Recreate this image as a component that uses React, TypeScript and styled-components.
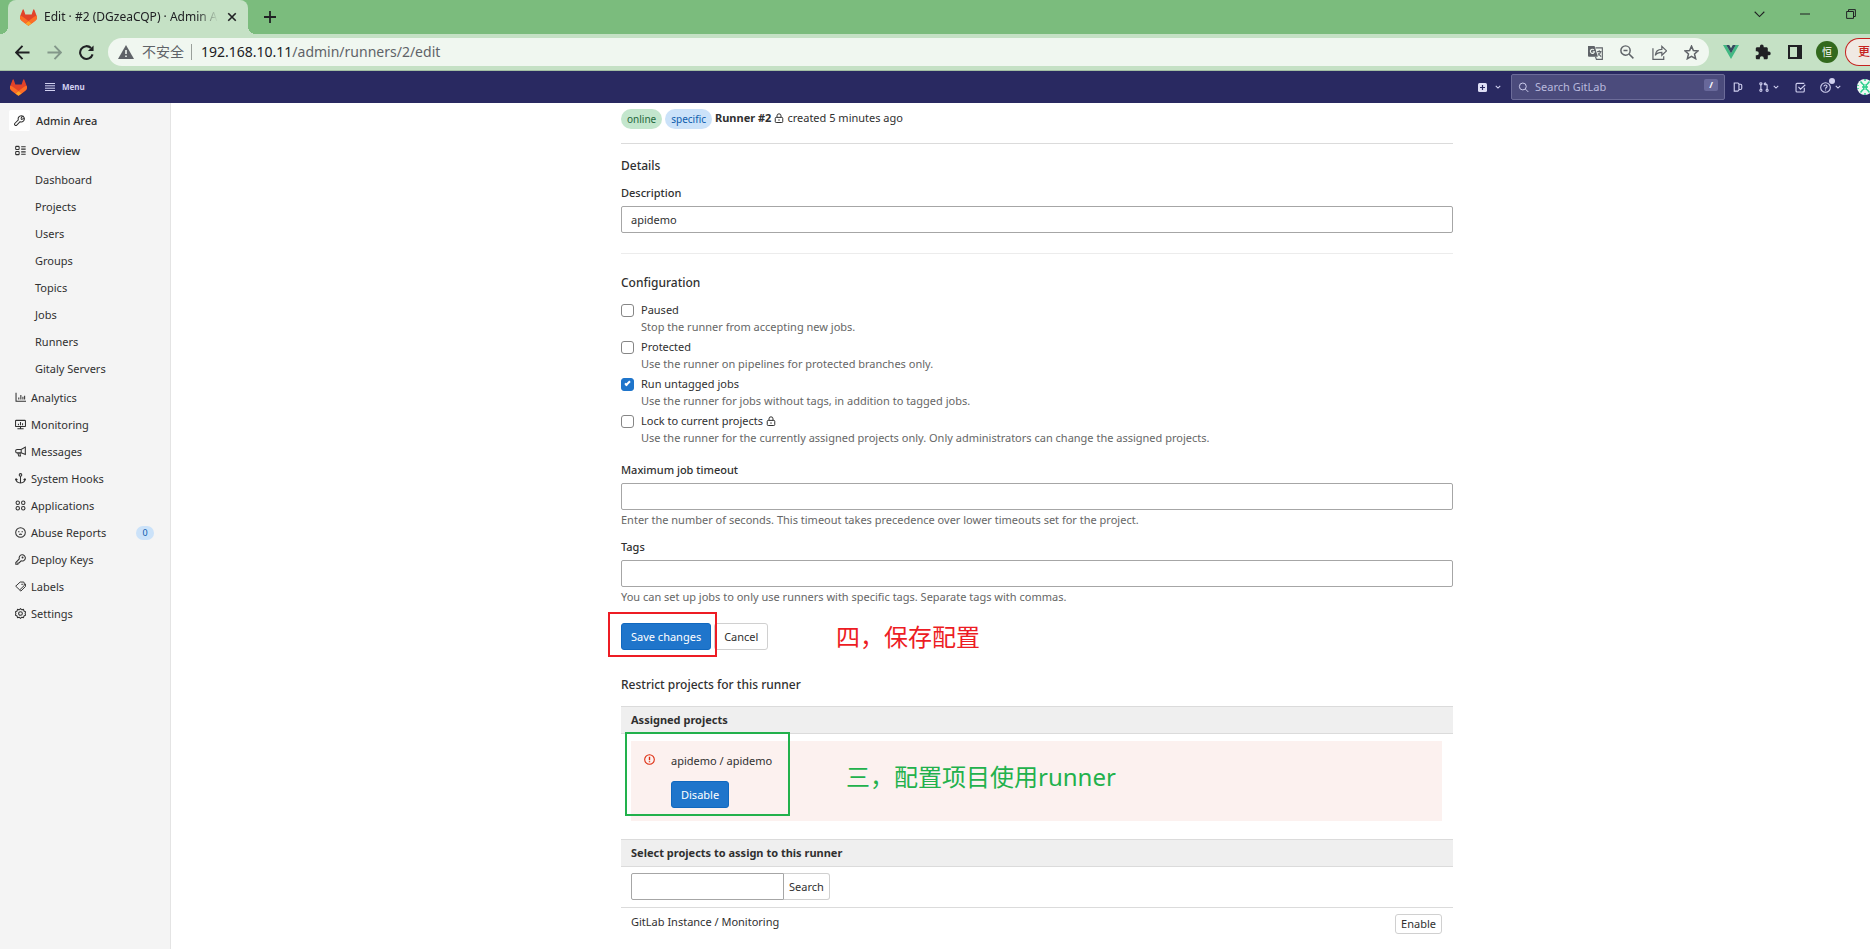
import React from "react";
import styled, { createGlobalStyle } from "styled-components";

const sans = `"Noto Sans", "Open Sans", "Noto Sans CJK SC", sans-serif`;

const GlobalStyle = createGlobalStyle`
  *, *::before, *::after { box-sizing: border-box; }
  html, body { margin: 0; padding: 0; }
  body {
    background: #fff;
    color: #303030;
    font-family: ${sans};
    font-size: 11px;
    line-height: 16px;
    overflow-x: hidden;
  }
  button, input { font: inherit; color: inherit; margin: 0; }
  button { cursor: pointer; }
  svg { display: block; flex: none; }
`;

const Page = styled.div`
  display: flex;
  flex-direction: column;
  min-height: 100vh;
  overflow: hidden;
`;

/* ---------- Browser window ---------- */

const TabStrip = styled.div`
  display: flex;
  height: 34px;
  padding: 0 12px 0 8px;
  background: #7bbc7d;
`;

const Tab = styled.div`
  position: relative;
  display: flex;
  align-items: center;
  width: 240px;
  padding: 0 9px 0 12px;
  gap: 7px;
  border-radius: 8px 8px 0 0;
  background: #c5e1c5;
  color: #202124;
  &::before, &::after {
    content: "";
    position: absolute;
    bottom: 0;
    width: 8px;
    height: 8px;
  }
  &::before {
    left: -8px;
    background: radial-gradient(circle at 0 0, transparent 8px, #c5e1c5 8px);
  }
  &::after {
    right: -8px;
    background: radial-gradient(circle at 100% 0, transparent 8px, #c5e1c5 8px);
  }
`;

const TabTitle = styled.span`
  flex: 1;
  white-space: nowrap;
  font-size: 12px;
  mask-image: linear-gradient(to right, #000 88%, transparent);
`;

const IconButton = styled.button<{ $w?: number; $h?: number; $color?: string }>`
  display: flex;
  flex: none;
  align-items: center;
  justify-content: center;
  width: ${(p) => p.$w ?? 32}px;
  height: ${(p) => p.$h ?? 28}px;
  padding: 0;
  border: 0;
  background: none;
  color: ${(p) => p.$color ?? "#202124"};
`;

const NewTab = styled(IconButton)`
  margin-left: 6px;
  align-self: center;
`;

const WindowControls = styled.div`
  display: flex;
  margin-left: auto;
  margin-right: -16px;
`;

const Toolbar = styled.div`
  display: flex;
  align-items: center;
  height: 37px;
  padding-left: 6px;
  background: #c5e1c5;
  border-bottom: 1px solid #a3bfa4;
`;

const Omnibox = styled.div`
  display: flex;
  flex: 1;
  align-items: center;
  height: 28px;
  margin: 0 6px;
  padding: 0 2px 0 10px;
  border-radius: 14px;
  background: #f0f7f0;
  color: #5f6368;
`;

const Insecure = styled.span`
  margin-left: 8px;
  padding-right: 7px;
  border-right: 1px solid #9aa09b;
  font-size: 14px;
`;

const Url = styled.span`
  flex: 1;
  margin-left: 9px;
  font-size: 14px;
  white-space: nowrap;
  b { font-weight: 400; color: #202124; }
`;

const Profile = styled.span`
  display: flex;
  align-items: center;
  justify-content: center;
  width: 22px;
  height: 22px;
  margin: 0 7px 0 5px;
  border-radius: 50%;
  background: #33691e;
  color: #fff;
  font-size: 10px;
`;

const UpdateButton = styled.button`
  width: 25px;
  height: 28px;
  padding: 0 0 0 12px;
  border: 1px solid #c5221f;
  border-right: 0;
  border-radius: 14px 0 0 14px;
  background: #f0e9e3;
  color: #c5221f;
  font-size: 12px;
  font-weight: 500;
  text-align: left;
  white-space: nowrap;
`;

/* ---------- GitLab top bar ---------- */

const TopBar = styled.header`
  display: flex;
  align-items: center;
  height: 32px;
  padding-left: 10px;
  background: #292961;
  color: #d1d1f0;
`;

const MenuButton = styled.button`
  display: flex;
  align-items: center;
  gap: 7px;
  margin-left: 18px;
  padding: 0;
  border: 0;
  background: none;
  font-size: 8px;
  font-weight: 700;
`;

const TopActions = styled.div`
  display: flex;
  align-items: center;
  margin-left: auto;
`;

const SearchBox = styled.label`
  position: relative;
  display: flex;
  align-items: center;
  width: 214px;
  height: 26px;
  margin: 0 8px 0 10px;
  padding: 0 6px;
  border: 1px solid #6c6c99;
  border-radius: 2px;
  background: #4b4b7c;
  input {
    width: 100%;
    margin-left: 6px;
    padding: 0;
    border: 0;
    outline: 0;
    background: none;
  }
  input::placeholder { color: #b9b9dc; opacity: 1; }
`;

const Key = styled.kbd`
  flex: none;
  align-self: flex-start;
  width: 14px;
  height: 12px;
  margin-top: 4px;
  border-radius: 2px;
  background: #68689a;
  color: #fff;
  font: 700 9px/12px ${sans};
  text-align: center;
`;

const TopItem = styled.button<{ $ml?: number }>`
  position: relative;
  display: flex;
  align-items: center;
  gap: 4px;
  height: 24px;
  margin-left: ${(p) => p.$ml ?? 16}px;
  padding: 0;
  border: 0;
  background: none;
`;

const Dot = styled.span`
  position: absolute;
  left: 9px;
  top: 3px;
  width: 6px;
  height: 6px;
  border-radius: 50%;
  background: #d1d1f0;
`;

const Avatar = styled.span`
  width: 13px;
  height: 16px;
  margin-left: 16px;
  overflow: hidden;
`;

/* ---------- Sidebar ---------- */

const Body = styled.div`
  display: flex;
  flex: 1;
`;

const Sidebar = styled.nav`
  flex: none;
  width: 171px;
  padding-top: 7px;
  border-right: 1px solid #e4e4e4;
  background: #f4f4f4;
`;

const ContextLink = styled.a`
  display: flex;
  align-items: center;
  gap: 6px;
  height: 21px;
  margin-left: 9px;
  color: #303030;
  font-weight: 500;
  text-decoration: none;
  span {
    display: flex;
    align-items: center;
    justify-content: center;
    width: 21px;
    height: 21px;
    border-radius: 2px;
    background: #fff;
  }
`;

const NavList = styled.ul<{ $sub?: boolean }>`
  margin: 0;
  padding: ${(p) => (p.$sub ? "2px 0 2px" : "6px 0 0")};
  list-style: none;
`;

const NavLink = styled.a<{ $sub?: boolean; $active?: boolean }>`
  display: flex;
  align-items: center;
  gap: 5px;
  height: 27px;
  padding: 0 16px 0 ${(p) => (p.$sub ? 35 : 15)}px;
  color: #303030;
  font-weight: ${(p) => (p.$active ? 500 : 400)};
  text-decoration: none;
`;

const Count = styled.span`
  width: 18px;
  height: 14px;
  margin-left: auto;
  border-radius: 7px;
  background: #cbe2f9;
  color: #0b5cad;
  font-size: 9px;
  line-height: 14px;
  text-align: center;
`;

/* ---------- Main content ---------- */

const Main = styled.main`
  flex: 1;
  min-width: 0;
  padding: 6px 0 0 33px;
`;

const Column = styled.div`
  width: 100%;
  max-width: 832px;
  margin: 0 auto;
`;

const RunnerHeader = styled.div`
  display: flex;
  gap: 3px;
  height: 20px;
`;

const Badge = styled.span<{ $tone: "green" | "blue" }>`
  height: 20px;
  padding: 0 6px;
  border-radius: 10px;
  background: ${(p) => (p.$tone === "green" ? "#c3e6cd" : "#cbe2f9")};
  color: ${(p) => (p.$tone === "green" ? "#24663b" : "#0b5cad")};
  font-size: 10px;
  line-height: 20px;
`;

const RunnerName = styled.span`
  display: flex;
  align-items: center;
  gap: 3px;
  height: 18px;
`;

const Rule = styled.hr<{ $light?: boolean }>`
  height: 1px;
  margin: ${(p) => (p.$light ? "20px 0 21px" : "14px 0 14px")};
  border: 0;
  background: ${(p) => (p.$light ? "#ececec" : "#dbdbdb")};
`;

const SectionTitle = styled.h4`
  margin: 0 0 11px;
  font-size: 12px;
  font-weight: 500;
  line-height: 16px;
`;

const Field = styled.div`
  display: flex;
  flex-direction: column;
  & + & { margin-top: 11px; }
`;

const FieldLabel = styled.label`
  margin-bottom: 5px;
  font-weight: 500;
`;

const TextInput = styled.input`
  width: 100%;
  height: 27px;
  padding: 0 9px;
  border: 1px solid #a6a6a6;
  border-radius: 2px;
  background: #fff;
`;

const Help = styled.p`
  margin: 0;
  color: #666;
`;

const FieldHelp = styled(Help)`
  margin-top: 2px;
`;

const Checks = styled.div`
  display: flex;
  flex-direction: column;
  gap: 4px;
  margin-bottom: 16px;
`;

const Check = styled.div`
  display: grid;
  grid-template-columns: 13px 1fr;
  column-gap: 7px;
  row-gap: 1px;
  align-items: center;
  label {
    display: flex;
    align-items: center;
    gap: 3px;
  }
  ${Help} { grid-column: 2; }
`;

const Checkbox = styled.input`
  appearance: none;
  width: 13px;
  height: 13px;
  border: 1px solid #868686;
  border-radius: 3px;
  background: #fff;
  &:checked {
    border-color: #1f75cb;
    background: #1f75cb;
  }
  &:checked::after {
    content: "";
    display: block;
    width: 3px;
    height: 6px;
    margin: 1px 0 0 4px;
    border: solid #fff;
    border-width: 0 2px 2px 0;
    transform: rotate(45deg);
  }
`;

const Actions = styled.div`
  position: relative;
  display: flex;
  gap: 3px;
  margin: 18px 0 27px;
`;

const Button = styled.button<{ $primary?: boolean; $small?: boolean }>`
  height: ${(p) => (p.$small ? 20 : 27)}px;
  padding: 0 ${(p) => (p.$small ? 5 : 9)}px;
  border: 1px solid ${(p) => (p.$primary ? "#1068bf" : "#d0d0d0")};
  border-radius: 3px;
  background: ${(p) => (p.$primary ? "#1f75cb" : "#fff")};
  color: ${(p) => (p.$primary ? "#fff" : "#303030")};
  line-height: 16px;
  white-space: nowrap;
`;

const Table = styled.table`
  width: 100%;
  border-collapse: separate;
  border-spacing: 0;
  margin: 13px 0;
`;

const HeadCell = styled.th`
  height: 28px;
  padding: 0 10px;
  border-top: 1px solid #dbdbdb;
  border-bottom: 1px solid #dbdbdb;
  background: #efefef;
  font-weight: 700;
  text-align: left;
`;

const AlertCell = styled.td`
  padding: 7px 11px 5px 10px;
`;

const Alert = styled.div`
  position: relative;
  display: flex;
  gap: 16px;
  height: 80px;
  padding: 12px 13px;
  background: #fcf1ef;
`;

const AlertBody = styled.div`
  display: flex;
  flex-direction: column;
  align-items: flex-start;
  gap: 12px;
`;

const AlertIcon = styled.span`
  padding-top: 1px;
`;

const SearchCell = styled.td`
  padding: 6px 10px 7px;
  border-bottom: 1px solid #dbdbdb;
`;

const SearchForm = styled.form`
  display: flex;
  ${TextInput} {
    width: 153px;
    border-radius: 2px 0 0 2px;
  }
  ${Button} {
    padding: 0 5px;
    border-left: 0;
    border-radius: 0 3px 3px 0;
  }
`;

const ProjectCell = styled.td<{ $end?: boolean }>`
  padding: 6px 11px 0 10px;
  vertical-align: top;
  text-align: ${(p) => (p.$end ? "right" : "left")};
`;

/* ---------- Hand-drawn marks over the page ---------- */

const Frame = styled.span<{ $color: string }>`
  position: absolute;
  border: 2px solid ${(p) => p.$color};
  pointer-events: none;
`;

const SaveFrame = styled(Frame)`
  left: -13px;
  top: -11px;
  width: 109px;
  height: 45px;
`;

const ProjectFrame = styled(Frame)`
  left: -6px;
  top: -9px;
  width: 165px;
  height: 84px;
`;

const Note = styled.span<{ $color: string }>`
  position: absolute;
  left: 215px;
  top: 0;
  color: ${(p) => p.$color};
  font-size: 24px;
  line-height: 28px;
  white-space: nowrap;
`;

const ProjectNote = styled(Note)`
  top: 22px;
`;

/* ---------- Icons ---------- */

type IconProps = { size?: number; children: React.ReactNode; sw?: number };

const Icon = ({ size = 11, sw = 1.5, children }: IconProps) => (
  <svg width={size} height={size} viewBox="0 0 16 16" fill="none" stroke="currentColor" strokeWidth={sw} aria-hidden="true">
    {children}
  </svg>
);

const Tanuki = () => (
  <svg width="17" height="17" viewBox="0 0 25 24" aria-hidden="true">
    <path fill="#e24329" d="m24.507 9.5-.034-.09L21.082.562a.896.896 0 0 0-1.694.091l-2.290 7.010H7.825L5.535.653a.898.898 0 0 0-1.694-.090L.451 9.411.416 9.500a6.297 6.297 0 0 0 2.090 7.278l.012.010.030.022 5.160 3.867 2.560 1.935 1.554 1.176a1.051 1.051 0 0 0 1.268 0l1.555-1.176 2.560-1.935 5.197-3.890.014-.010A6.297 6.297 0 0 0 24.507 9.500Z" />
    <path fill="#fc6d26" d="m24.507 9.500-.034-.090a11.440 11.440 0 0 0-4.560 2.051l-7.447 5.632 4.742 3.584 5.197-3.890.014-.010A6.297 6.297 0 0 0 24.507 9.500Z" />
    <path fill="#fca326" d="m7.707 20.677 2.560 1.935 1.555 1.176a1.051 1.051 0 0 0 1.268 0l1.555-1.176 2.560-1.935-4.743-3.584-4.755 3.584Z" />
    <path fill="#fc6d26" d="M5.010 11.461a11.430 11.430 0 0 0-4.560-2.050L.416 9.500a6.297 6.297 0 0 0 2.090 7.278l.012.010.030.022 5.160 3.867 4.745-3.584-7.444-5.632Z" />
  </svg>
);

const Lock = () => (
  <Icon size={10} sw={1.6}>
    <rect x="2" y="7" width="12" height="8.2" rx="1.5" />
    <path d="M4.800 7V4.500a3.200 3.200 0 0 1 6.400 0V7M8 10v2.500" />
  </Icon>
);

const Chevron = ({ size = 6 }: { size?: number }) => (
  <Icon size={size} sw={2.8}><path d="m2 5 6 6 6-6" /></Icon>
);

const Wrench = () => (
  <Icon>
    <path d="M10.500 1.200a4.500 4.500 0 0 0-4.200 6L1.400 12a1.800 1.800 0 0 0 2.600 2.600l4.900-4.900a4.500 4.500 0 0 0 6-5.400 4.500 4.500 0 0 0-4.400-3.100zM10 5l2-3M10 5l1 1.500 3.500-1.500" />
  </Icon>
);

const icons: Record<string, React.ReactNode> = {
  overview: (
    <Icon>
      <rect x="1" y="2" width="5" height="4.5" rx="1" /><rect x="1" y="9.5" width="5" height="4.5" rx="1" />
      <path d="M9 2.500h6.500M9 6h6.500M9 10h6.500M9 13.500h6.500" />
    </Icon>
  ),
  analytics: <Icon><path d="M1.500 1v12.500H16M5.500 11V8M8.500 11V4.500M11.500 11V7M14 11V5.500" /></Icon>,
  monitoring: (
    <Icon>
      <rect x=".8" y="2" width="14.4" height="9" rx="1" />
      <path d="M5 9V7M8 9V4.500M11 9V6M8 11v3M3.500 14.200h9" />
    </Icon>
  ),
  messages: (
    <Icon>
      <path d="M15 1.500v11L9 10H3a2 2 0 0 1-2-2V7a2 2 0 0 1 2-2h6zM9 5v5M4 10l1.500 4.500H8L7 10" />
    </Icon>
  ),
  hooks: (
    <Icon>
      <circle cx="8" cy="2.8" r="1.9" />
      <path d="M8 4.700v9.800M1.500 8.500c0 4 3 6 6.500 6s6.500-2 6.500-6M.3 10.500l1.300-2 2 1.500M15.700 10.500l-1.300-2-2 1.500" />
    </Icon>
  ),
  applications: (
    <Icon>
      <circle cx="4" cy="4" r="2.5" /><circle cx="12" cy="4" r="2.5" />
      <circle cx="4" cy="12" r="2.5" /><circle cx="12" cy="12" r="2.5" />
    </Icon>
  ),
  abuse: (
    <Icon>
      <circle cx="8" cy="8" r="7" />
      <path d="M4.500 7h2M9.500 7h2M6 11.200c1-1 3-1 4 0" />
    </Icon>
  ),
  keys: (
    <Icon>
      <path d="M6.300 7.200 1.200 12.400v2.400h3V13h1.700l3-3.100a4.500 4.500 0 1 0-2.600-2.700z" />
      <circle cx="11" cy="5" r=".7" />
    </Icon>
  ),
  labels: (
    <Icon sw={1.4}>
      <path d="M7.500 1.500H12a1.500 1.500 0 0 1 1.500 1.500v3.500L6.800 13 1 7.500zM6.800 13l1.700 1.700 6.700-6.700V4" />
      <circle cx="10.3" cy="4.7" r=".5" />
    </Icon>
  ),
  settings: (
    <Icon>
      <path d="m8 .9 1.800 1.700 2.500-.5.800 2.400 2.300 1L14.700 8l.7 2.500-2.300 1-.8 2.400-2.500-.5L8 15.100l-1.800-1.700-2.500.5-.8-2.400-2.300-1L1.300 8 .6 5.500l2.300-1 .8-2.400 2.500.5z" />
      <circle cx="8" cy="8" r="2.7" />
    </Icon>
  ),
};

const overviewLinks = ["Dashboard", "Projects", "Users", "Groups", "Topics", "Jobs", "Runners", "Gitaly Servers"];

const navLinks: { label: string; icon: string; count?: number }[] = [
  { label: "Analytics", icon: "analytics" },
  { label: "Monitoring", icon: "monitoring" },
  { label: "Messages", icon: "messages" },
  { label: "System Hooks", icon: "hooks" },
  { label: "Applications", icon: "applications" },
  { label: "Abuse Reports", icon: "abuse", count: 0 },
  { label: "Deploy Keys", icon: "keys" },
  { label: "Labels", icon: "labels" },
  { label: "Settings", icon: "settings" },
];

const options = [
  { id: "paused", label: "Paused", help: "Stop the runner from accepting new jobs." },
  { id: "protected", label: "Protected", help: "Use the runner on pipelines for protected branches only." },
  { id: "untagged", label: "Run untagged jobs", help: "Use the runner for jobs without tags, in addition to tagged jobs.", checked: true },
  {
    id: "locked",
    label: "Lock to current projects",
    help: "Use the runner for the currently assigned projects only. Only administrators can change the assigned projects.",
    lock: true,
  },
];

const BrowserChrome = () => (
  <>
    <TabStrip>
      <Tab>
        <Tanuki />
        <TabTitle>Edit · #2 (DGzeaCQP) · Admin A</TabTitle>
        <IconButton $w={14} $h={14} aria-label="Close tab">
          <Icon size={10} sw={2.6}><path d="m2 2 12 12M14 2 2 14" /></Icon>
        </IconButton>
      </Tab>
      <NewTab aria-label="New tab">
        <Icon size={12} sw={2.4}><path d="M8 0v16M0 8h16" /></Icon>
      </NewTab>
      <WindowControls>
        <IconButton $w={46} aria-label="Search tabs"><Icon size={11} sw={1.6}><path d="m1 4 7 7 7-7" /></Icon></IconButton>
        <IconButton $w={46} aria-label="Minimize"><Icon size={10} sw={1.6}><path d="M0 8h16" /></Icon></IconButton>
        <IconButton $w={46} aria-label="Restore">
          <Icon size={10} sw={1.6}><path d="M1 4h11v11H1zM4 4V1h11v11h-3" /></Icon>
        </IconButton>
      </WindowControls>
    </TabStrip>
    <Toolbar>
      <IconButton aria-label="Back"><Icon size={15} sw={2}><path d="M15.500 8H1.500M8 1 1.200 8 8 15" /></Icon></IconButton>
      <IconButton $color="#83978a" aria-label="Forward"><Icon size={15} sw={2}><path d="M.5 8h14M8 1l6.800 7L8 15" /></Icon></IconButton>
      <IconButton aria-label="Reload">
        <Icon size={15} sw={2.2}><path d="M14.500 10A6.800 6.800 0 1 1 12.800 3.200" /><path d="M15.500.5v6h-6z" fill="currentColor" stroke="none" /></Icon>
      </IconButton>
      <Omnibox>
        <svg width="16" height="14" viewBox="0 0 16 14" aria-hidden="true">
          <path d="M8 0l8 14H0z" fill="#5f6368" /><path d="M7.200 5h1.600v4H7.200zM7.200 10.500h1.600V12H7.200z" fill="#f0f7f0" />
        </svg>
        <Insecure>不安全</Insecure>
        <Url><b>192.168.10.11</b>/admin/runners/2/edit</Url>
        <IconButton $color="#5f6368" aria-label="Translate">
          <Icon size={15} sw={1.2}>
            <path d="M0 1h7l3.500 11.500H1a1 1 0 0 1-1-1z" fill="currentColor" stroke="none" />
            <path d="M8 3h7.300v12.300H9L8 12.500M9.800 7h4.500M12 5.500V7M13.500 7c-.4 2-1.500 3.300-3 4M10.800 9l3.200 3.500" />
            <path d="M6.300 5.200a2.200 2.200 0 1 0 .6 2H5" stroke="#f0f7f0" />
          </Icon>
        </IconButton>
        <IconButton $color="#5f6368" aria-label="Zoom">
          <Icon size={14} sw={1.7}><circle cx="6.3" cy="6.3" r="5.3" /><path d="m10.300 10.300 5 5M4 6.300h4.600" /></Icon>
        </IconButton>
        <IconButton $color="#5f6368" aria-label="Share">
          <Icon size={15} sw={1.3}><path d="M1 3.500v11.800h11.500V12M3.500 11c.5-4.500 3.500-6.300 7-6.300V1.500l5 4.800-5 4.700V7.800C7.500 7.800 5 8.500 3.500 11z" /></Icon>
        </IconButton>
        <IconButton $color="#5f6368" aria-label="Bookmark">
          <Icon size={15} sw={1.6}><path d="m8 1.200 2 4.700 5 .4-3.800 3.300 1.200 5L8 12l-4.400 2.600 1.200-5L1 6.300l5-.4z" /></Icon>
        </IconButton>
      </Omnibox>
      <IconButton aria-label="Vue.js devtools">
        <svg width="16" height="14" viewBox="0 0 16 14" aria-hidden="true">
          <path d="M0 0h3.200L8 8.300 12.800 0H16L8 14z" fill="#41b883" /><path d="M3.200 0h3L8 3.200 9.800 0h3L8 8.300z" fill="#35495e" />
        </svg>
      </IconButton>
      <IconButton aria-label="Extensions">
        <Icon size={16}>
          <path fill="currentColor" stroke="none" d="M13.800 7.500h-1V4.700c0-.8-.6-1.400-1.400-1.400H8.700V2.400a1.900 1.900 0 0 0-3.800 0v.9H2.200C1.400 3.300.8 3.900.8 4.700v2.600h1a2 2 0 0 1 0 4h-1v2.600c0 .8.600 1.400 1.400 1.400h2.600v-1a2 2 0 0 1 4 0v1h2.600c.8 0 1.400-.6 1.400-1.400v-2.600h1a1.900 1.900 0 0 0 0-3.800z" />
        </Icon>
      </IconButton>
      <IconButton aria-label="Side panel">
        <svg width="14" height="14" viewBox="0 0 14 14" aria-hidden="true"><path fill="#202124" fillRule="evenodd" d="M0 0h14v14H0zM2 2v10h7V2z" /></svg>
      </IconButton>
      <Profile>恒</Profile>
      <UpdateButton>更</UpdateButton>
    </Toolbar>
  </>
);

const GitLabBar = () => (
  <TopBar>
    <Tanuki />
    <MenuButton>
      <svg width="10" height="8" viewBox="0 0 10 8" stroke="currentColor" aria-hidden="true"><path d="M0 .5h10M0 2.800h10M0 5.200h10M0 7.500h10" /></svg>
      Menu
    </MenuButton>
    <TopActions>
      <TopItem aria-label="Create new">
        <svg width="9" height="9" viewBox="0 0 9 9" aria-hidden="true"><rect width="9" height="9" rx="1.5" fill="#dfdff5" /><path d="M4.500 2v5M2 4.500h5" stroke="#292961" strokeWidth="1.2" /></svg>
      </TopItem>
      <TopItem $ml={8} aria-label="More"><Chevron /></TopItem>
      <SearchBox>
        <Icon size={11} sw={1.4}><circle cx="7" cy="6.5" r="5" /><path d="m10.800 10.300 4.200 4.200" /></Icon>
        <input type="text" placeholder="Search GitLab" aria-label="Search GitLab" />
        <Key>/</Key>
      </SearchBox>
      <TopItem $ml={0} aria-label="Issues">
        <Icon size={10} sw={1.8}><path d="M2 1.500h5.500a2 2 0 0 1 2 2v9a2 2 0 0 1-2 2H2zM9.500 3.500h2.500a2 2 0 0 1 2 2v4.500a2 2 0 0 1-2 2H9.500" /></Icon>
      </TopItem>
      <TopItem aria-label="Merge requests">
        <Icon size={10} sw={1.8}><circle cx="3" cy="2.8" r="1.7" /><circle cx="3" cy="13.2" r="1.7" /><circle cx="13" cy="13.2" r="1.7" /><path d="M3 4.500v7M13 11.500V6c0-2-1-3-4-3M10.500.8 8.300 3l2.200 2.200" /></Icon>
        <Chevron />
      </TopItem>
      <TopItem aria-label="To-Do List">
        <Icon size={11} sw={1.6}><path d="M13.500 8.500V13a1.500 1.500 0 0 1-1.500 1.500H3A1.500 1.500 0 0 1 1.500 13V3.500A1.500 1.500 0 0 1 3 2h10.500M5 7l3 3.500 7-6.500" /></Icon>
      </TopItem>
      <TopItem $ml={14} aria-label="Help">
        <Icon size={11} sw={1.6}><circle cx="8" cy="8" r="7" /><path d="M5.800 6.500c0-3 4.600-2.800 4.400 0C10.200 8 8 8 8 9.800M8 11v1.500" /></Icon>
        <Dot />
        <Chevron />
      </TopItem>
      <Avatar>
        <svg width="16" height="16" viewBox="0 0 16 16" role="img" aria-label="Profile">
          <circle cx="8" cy="8" r="8" fill="#eefaf4" />
          <path d="M3.500 2.500 6 5.500M12.500 2.500 10 5.500M3.500 13.500 6 10.500M12.500 13.500 10 10.500M6.800 5v6M9.200 5v6M5 8h6M1 6v1M1 9v1M15 6v1M15 9v1M7 1h2M7 15h2" stroke="#2bd08c" strokeWidth="1.5" />
        </svg>
      </Avatar>
    </TopActions>
  </TopBar>
);

const AdminSidebar = () => (
  <Sidebar aria-label="Admin navigation">
    <ContextLink href="#admin"><span><Wrench /></span>Admin Area</ContextLink>
    <NavList>
      <li>
        <NavLink href="#overview" $active>{icons.overview}Overview</NavLink>
        <NavList $sub>
          {overviewLinks.map((label) => (
            <li key={label}><NavLink $sub href={"#" + label}>{label}</NavLink></li>
          ))}
        </NavList>
      </li>
      {navLinks.map(({ label, icon, count }) => (
        <li key={label}>
          <NavLink href={"#" + label}>
            {icons[icon]}
            {label}
            {count !== undefined && <Count>{count}</Count>}
          </NavLink>
        </li>
      ))}
    </NavList>
  </Sidebar>
);

export default function App() {
  return (
    <Page>
      <GlobalStyle />
      <BrowserChrome />
      <GitLabBar />
      <Body>
        <AdminSidebar />
        <Main>
          <Column>
            <RunnerHeader>
              <Badge $tone="green">online</Badge>
              <Badge $tone="blue">specific</Badge>
              <RunnerName><strong>Runner #2</strong><Lock /><span>created 5 minutes ago</span></RunnerName>
            </RunnerHeader>
            <Rule />
            <SectionTitle>Details</SectionTitle>
            <Field>
              <FieldLabel htmlFor="description">Description</FieldLabel>
              <TextInput id="description" type="text" defaultValue="apidemo" />
            </Field>
            <Rule $light />
            <SectionTitle>Configuration</SectionTitle>
            <Checks>
              {options.map((o) => (
                <Check key={o.id}>
                  <Checkbox type="checkbox" id={o.id} defaultChecked={o.checked} />
                  <label htmlFor={o.id}>{o.label}{o.lock && <Lock />}</label>
                  <Help>{o.help}</Help>
                </Check>
              ))}
            </Checks>
            <Field>
              <FieldLabel htmlFor="timeout">Maximum job timeout</FieldLabel>
              <TextInput id="timeout" type="text" />
              <FieldHelp>Enter the number of seconds. This timeout takes precedence over lower timeouts set for the project.</FieldHelp>
            </Field>
            <Field>
              <FieldLabel htmlFor="tags">Tags</FieldLabel>
              <TextInput id="tags" type="text" />
              <FieldHelp>You can set up jobs to only use runners with specific tags. Separate tags with commas.</FieldHelp>
            </Field>
            <Actions>
              <Button $primary>Save changes</Button>
              <Button>Cancel</Button>
              <SaveFrame $color="#ed1c24" />
              <Note $color="#ed1c24">四，保存配置</Note>
            </Actions>
            <SectionTitle>Restrict projects for this runner</SectionTitle>
            <Table>
              <thead><tr><HeadCell>Assigned projects</HeadCell></tr></thead>
              <tbody>
                <tr>
                  <AlertCell>
                    <Alert>
                      <AlertIcon>
                        <svg width="11" height="11" viewBox="0 0 16 16" fill="none" stroke="#dd2b0e" strokeWidth="1.6" aria-hidden="true">
                          <circle cx="8" cy="8" r="7" /><path d="M8 4v5M8 10.500V12" strokeWidth="2" />
                        </svg>
                      </AlertIcon>
                      <AlertBody>
                        <span>apidemo / apidemo</span>
                        <Button $primary>Disable</Button>
                      </AlertBody>
                      <ProjectFrame $color="#22b14c" />
                      <ProjectNote $color="#22b14c">三，配置项目使用runner</ProjectNote>
                    </Alert>
                  </AlertCell>
                </tr>
              </tbody>
            </Table>
            <Table>
              <thead><tr><HeadCell colSpan={2}>Select projects to assign to this runner</HeadCell></tr></thead>
              <tbody>
                <tr>
                  <SearchCell colSpan={2}>
                    <SearchForm onSubmit={(e) => e.preventDefault()}>
                      <TextInput type="text" aria-label="Search projects" />
                      <Button>Search</Button>
                    </SearchForm>
                  </SearchCell>
                </tr>
                <tr>
                  <ProjectCell>GitLab Instance / Monitoring</ProjectCell>
                  <ProjectCell $end><Button $small>Enable</Button></ProjectCell>
                </tr>
              </tbody>
            </Table>
          </Column>
        </Main>
      </Body>
    </Page>
  );
}
